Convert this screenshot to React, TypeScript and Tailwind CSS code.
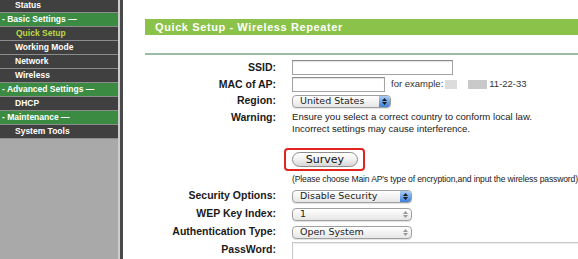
import React from 'react';

// Sidebar entries: kind decides row colour and indent
const menu: { label: string; kind: 'item' | 'group' | 'active' }[] = [
  { label: 'Status', kind: 'item' },
  { label: '- Basic Settings —', kind: 'group' },
  { label: 'Quick Setup', kind: 'active' },
  { label: 'Working Mode', kind: 'item' },
  { label: 'Network', kind: 'item' },
  { label: 'Wireless', kind: 'item' },
  { label: '- Advanced Settings —', kind: 'group' },
  { label: 'DHCP', kind: 'item' },
  { label: '- Maintenance —', kind: 'group' },
  { label: 'System Tools', kind: 'item' },
];

const Sidebar = () => (
  <aside className="w-[118px] shrink-0 bg-[#a9a9a9] flex flex-col">
    {menu.map((m, i) => (
      <div
        key={m.label}
        className={
          'h-[14px] shrink-0 flex items-center border-b border-[#8c8c8c] text-[8.5px] font-bold whitespace-nowrap ' +
          (i === 0 ? '-mt-[1px] ' : '') +
          (m.kind === 'group'
            ? 'bg-[#3c8b42] text-white pl-[2px]'
            : m.kind === 'active'
            ? 'bg-[#404040] text-[#bcd843] pl-[16px]'
            : 'bg-[#404040] text-white pl-[15px]')
        }
      >
        {m.label}
      </div>
    ))}
  </aside>
);

const Label: React.FC<{ children: React.ReactNode; className?: string }> = ({ children, className = '' }) => (
  <div className={'w-[131px] shrink-0 text-right text-[10.5px] font-bold text-[#1a1a1a] ' + className}>{children}</div>
);

const TextInput: React.FC<{ width: string }> = ({ width }) => (
  <div className={width + ' h-[15px] bg-white border border-[#a3a3a3] border-t-[#8b8b8b] shadow-[inset_0_1px_1px_rgba(0,0,0,0.12)]'} />
);

const Stepper: React.FC<{ active?: boolean }> = ({ active }) => (
  <div
    className={
      'w-[11px] h-full flex flex-col items-center justify-center gap-[1px] rounded-r-[3px] ' +
      (active ? 'bg-gradient-to-b from-[#a9cdf5] to-[#3d7fd8]' : '')
    }
  >
    <svg width="5" height="3" viewBox="0 0 5 3">
      <path d="M0 3 L2.5 0 L5 3 Z" fill={active ? '#1a1a1a' : '#9a9a9a'} />
    </svg>
    <svg width="5" height="3" viewBox="0 0 5 3">
      <path d="M0 0 L2.5 3 L5 0 Z" fill={active ? '#1a1a1a' : '#9a9a9a'} />
    </svg>
  </div>
);

const Select: React.FC<{ value: string; width: string; active?: boolean }> = ({ value, width, active }) => (
  <div
    className={
      width +
      ' h-[13px] flex items-center rounded-[4px] border border-[#a0a0a0] bg-gradient-to-b from-white to-[#e6e6e6] shadow-[0_1px_1px_rgba(0,0,0,0.12)]'
    }
  >
    <span className="flex-1 pl-[7px] text-[9.5px] leading-none text-[#222] font-['DejaVu_Sans',sans-serif]">{value}</span>
    <Stepper active={active} />
  </div>
);

export default function App() {
  return (
    <div className="w-[578px] h-[259px] flex overflow-hidden bg-white font-['Liberation_Sans',Arial,sans-serif]">
      <Sidebar />
      <div className="w-[2px] shrink-0 bg-[#cdcdcd]" />
      <div className="w-[3px] shrink-0 bg-[#4a4a4a]" />

      <main className="flex-1 min-w-0 pl-[22px] pt-[19px]">
        <div className="h-[16px] bg-[#8bc34a] flex items-center pl-[10px] text-[11px] tracking-[0.6px] font-bold text-white">
          Quick Setup - Wireless Repeater
        </div>
        <div className="mt-[18px] h-[2px] bg-[#9cbda5]" />

        <div className="flex flex-col">
          <div className="mt-[4px] h-[17px] flex items-center">
            <Label>SSID:</Label>
            <div className="pl-[16px]"><TextInput width="w-[161px]" /></div>
          </div>

          <div className="h-[17px] flex items-center">
            <Label>MAC of AP:</Label>
            <div className="pl-[16px] flex items-center">
              <TextInput width="w-[93px]" />
              <span className="ml-[6px] text-[9.5px] text-[#333]">for example:</span>
              <span className="ml-[2px] w-[12px] h-[9px] bg-[#dcdcdc]" />
              <span className="ml-[11px] w-[19px] h-[9px] bg-[#c9c9c9]" />
              <span className="ml-[2px] text-[9.5px] text-[#333]">11-22-33</span>
            </div>
          </div>

          <div className="h-[16px] flex items-center">
            <Label>Region:</Label>
            <div className="pl-[16px]"><Select value="United States" width="w-[99px]" active /></div>
          </div>

          <div className="mt-[2px] flex items-start">
            <Label className="leading-[12px]">Warning:</Label>
            <div className="pl-[16px] text-[9.6px] leading-[12px] text-[#222]">
              <div>Ensure you select a correct country to conform local law.</div>
              <div>Incorrect settings may cause interference.</div>
            </div>
          </div>

          <div className="mt-[11px] flex items-center">
            <Label>{''}</Label>
            <div className="pl-[16px]">
              <div className="-ml-[8px] inline-flex border-2 border-[#e2231f] rounded-[4px] pl-[6px] pr-[5px] py-[2px]">
                <button className="w-[66px] h-[15px] rounded-full border border-[#8e8e8e] bg-gradient-to-b from-white via-[#f1f1f1] to-[#d6d6d6] text-[11px] leading-none text-[#111] font-['DejaVu_Sans',sans-serif] flex items-center justify-center">
                  Survey
                </button>
              </div>
            </div>
          </div>

          <div className="mt-[2px] flex items-center">
            <Label>{''}</Label>
            <div className="pl-[16px] text-[8.6px] tracking-[-0.15px] leading-[12px] text-[#222] whitespace-nowrap">
              (Please choose Main AP's type of encryption,and input the wireless password)
            </div>
          </div>

          <div className="mt-[2px] h-[18px] flex items-center">
            <Label>Security Options:</Label>
            <div className="pl-[16px]"><Select value="Disable Security" width="w-[120px]" active /></div>
          </div>

          <div className="h-[18px] flex items-center">
            <Label>WEP Key Index:</Label>
            <div className="pl-[16px]"><Select value="1" width="w-[120px]" /></div>
          </div>

          <div className="h-[18px] flex items-center">
            <Label>Authentication Type:</Label>
            <div className="pl-[16px]"><Select value="Open System" width="w-[120px]" /></div>
          </div>

          <div className="flex items-start">
            <Label className="pt-[1px]">PassWord:</Label>
            <div className="pl-[16px] pt-[1px] flex-1">
              <div className="h-[22px] bg-white border border-[#c8c8c8] border-r-0 shadow-[inset_0_1px_1px_rgba(0,0,0,0.08)]" />
            </div>
          </div>
        </div>
      </main>
    </div>
  );
}
